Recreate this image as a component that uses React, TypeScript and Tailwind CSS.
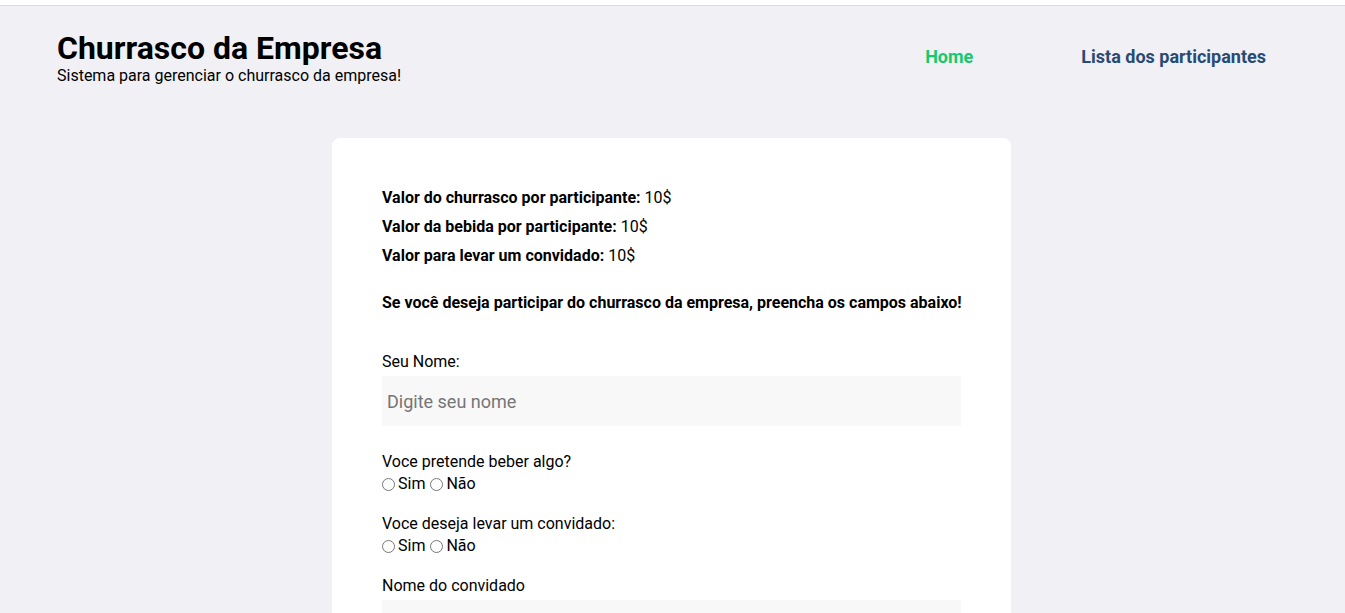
const PRICES = [
  { label: "Valor do churrasco por participante:", value: "10$" },
  { label: "Valor da bebida por participante:", value: "10$" },
  { label: "Valor para levar um convidado:", value: "10$" },
];

function RadioPair({ name }: { name: string }) {
  return (
    <div className="mt-[2px] flex items-center h-[22px] text-base">
      <label className="flex items-center">
        <input type="radio" name={name} className="w-[13px] h-[13px] m-0 mr-[3px] accent-gray-500" />
        Sim
      </label>
      <label className="flex items-center ml-[5px]">
        <input type="radio" name={name} className="w-[13px] h-[13px] m-0 mr-[3px] accent-gray-500" />
        Não
      </label>
    </div>
  );
}

export default function App() {
  return (
    <div className="min-h-screen bg-[#f0f0f5] font-['Roboto',sans-serif] text-black">
      <div className="h-[6px] bg-white border-b border-[#dcdce0]" />

      {/* Header */}
      <header className="flex items-start justify-between pl-[57px] pr-[79px] pt-[24px]">
        <div>
          <h1 className="text-[32px] font-bold leading-[36px]">Churrasco da Empresa</h1>
          <p className="text-base leading-[20px]">Sistema para gerenciar o churrasco da empresa!</p>
        </div>
        <nav className="flex gap-[108px] pt-[13px] text-lg font-bold">
          <a className="text-[#16c96f]">Home</a>
          <a className="text-[#284a74]">Lista dos participantes</a>
        </nav>
      </header>

      {/* Card */}
      <main className="flex justify-center pt-[52px] pr-[2px]">
        <div className="w-[679px] bg-white rounded-lg px-[50px] pt-[50px] pb-10">
          <div className="flex flex-col gap-[10px] text-base leading-[19px]">
            {PRICES.map(({ label, value }) => (
              <p key={label}>
                <span className="font-bold">{label}</span> {value}
              </p>
            ))}
          </div>

          <p className="mt-[28px] font-bold text-base leading-[19px] whitespace-nowrap">
            Se você deseja participar do churrasco da empresa, preencha os campos abaixo!
          </p>

          <form className="mt-[40px] flex flex-col">
            <label className="text-base leading-[19px]">Seu Nome:</label>
            <input
              placeholder="Digite seu nome"
              className="mt-[5px] h-[50px] w-full bg-[#f8f8f8] px-[5px] text-lg outline-none placeholder:text-[#757575] font-['Roboto',sans-serif]"
            />

            <label className="mt-[26px] text-base leading-[19px]">Voce pretende beber algo?</label>
            <RadioPair name="bebida" />

            <label className="mt-[19px] text-base leading-[19px]">Voce deseja levar um convidado:</label>
            <RadioPair name="convidado" />

            <label className="mt-[19px] text-base leading-[19px]">Nome do convidado</label>
            <input className="mt-[5px] h-[50px] w-full bg-[#f8f8f8] px-[5px] text-lg outline-none" />
          </form>
        </div>
      </main>
    </div>
  );
}
